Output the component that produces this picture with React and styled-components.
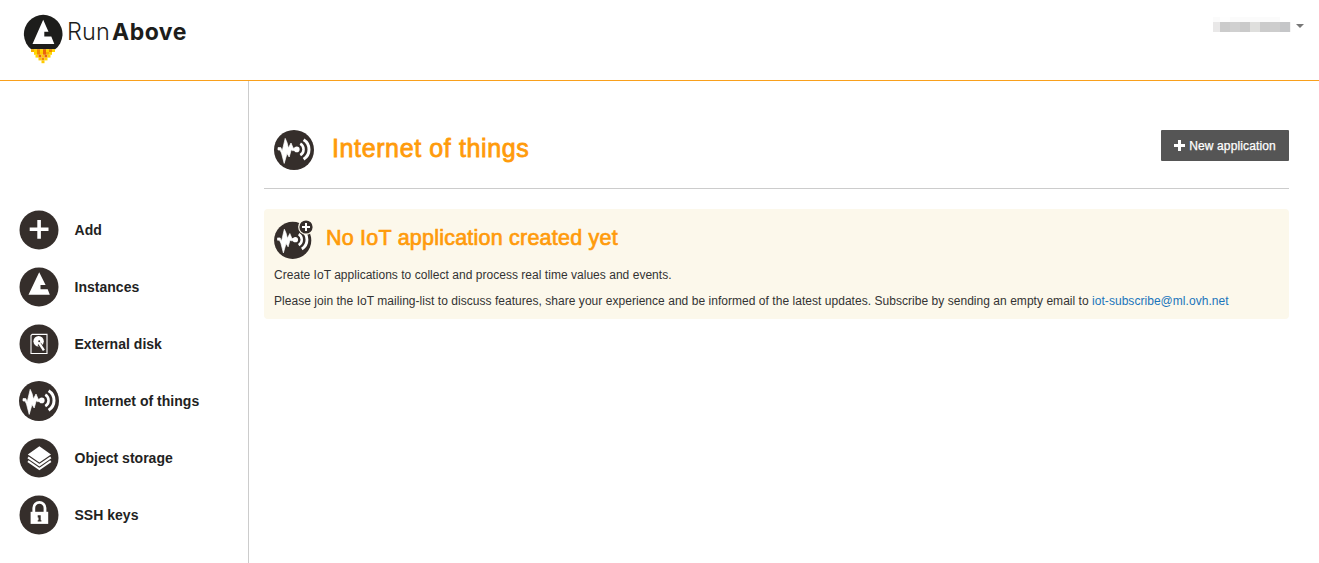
import React from "react";
import styled, { createGlobalStyle } from "styled-components";

const GlobalStyle = createGlobalStyle`
  * { box-sizing: border-box; }
  html, body { margin: 0; padding: 0; background: #fff; }
  body { font-family: "Liberation Sans", Arial, sans-serif; font-size: 12px; color: #333; }
`;

const INK = "#352e2b";
const ORANGE = "#ff9b0b";

const Page = styled.div`
  display: flex;
  flex-direction: column;
  height: 563px;
  overflow: hidden;
`;
const Header = styled.header`
  display: flex;
  justify-content: space-between;
  align-items: flex-start;
  height: 81px;
  padding: 14px 15px 0 23px;
  border-bottom: 1px solid #f9a01c;
`;
const Brand = styled.div`
  display: flex;
  align-items: flex-start;
  color: #1d1d1b;
  font-family: Lato, sans-serif;
`;
const BrandLight = styled.span`
  margin: 4px 0 0 3px;
  width: 45px;
  font-family: Inter, sans-serif;
  font-size: 23.5px;
  font-weight: 300;
  line-height: 28px;
  letter-spacing: 0.1px;
`;
const BrandBold = styled.span`
  margin-top: 4px;
  font-family: Inter, sans-serif;
  font-size: 23px;
  font-weight: 700;
  line-height: 28px;
  letter-spacing: 0.5px;
`;
const User = styled.div`
  display: flex;
  align-items: center;
  gap: 5px;
  margin-top: 3px;
`;
const Redacted = styled.div`
  display: grid;
  grid-template-columns: 7px repeat(7, 10px) 1px;
  grid-template-rows: 5px 10px;
`;
const Tile = styled.span`
  background: ${(p) => p.$tone};
`;
const Caret = styled.span`
  border: 4px solid transparent;
  border-top-color: #777;
  border-bottom: 0;
  margin-top: 2px;
`;
const Body = styled.div`
  display: flex;
  flex: 1;
  min-height: 0;
`;
const Sidebar = styled.nav`
  width: 249px;
  padding: 120px 0 0 19px;
  border-right: 1px solid #ccc;
`;
const NavItem = styled.a`
  display: flex;
  align-items: center;
  gap: ${(p) => (p.$active ? "25.5px" : "15.5px")};
  height: 57px;
  color: #222;
  font-size: 14px;
  font-weight: 700;
  letter-spacing: 0.02px;
`;
const Main = styled.main`
  flex: 1;
  padding: 48px 30px 0 15px;
`;
const TitleRow = styled.div`
  display: flex;
  align-items: flex-start;
  height: 60px;
  padding: 1px 0 0 10px;
  border-bottom: 1px solid #ccc;
`;
const Title = styled.h1`
  flex: 1;
  margin: 3px 0 0 18px;
  color: ${ORANGE};
  font-size: 25px;
  font-weight: 400;
  line-height: 30px;
  letter-spacing: 0.62px;
  -webkit-text-stroke: 0.8px ${ORANGE};
`;
const Button = styled.button`
  display: flex;
  align-items: center;
  justify-content: center;
  gap: 4px;
  width: 128px;
  height: 31px;
  padding: 0;
  border: 0;
  border-radius: 1px;
  background: #555;
  color: #fff;
  font: 12px "Liberation Sans", Arial, sans-serif;
  letter-spacing: 0.12px;
  -webkit-text-stroke: 0.25px #fff;
`;
const Notice = styled.section`
  height: 110px;
  margin-top: 20px;
  padding: 10px;
  border-radius: 4px;
  background: #fcf8eb;
`;
const NoticeHead = styled.div`
  display: flex;
  height: 40px;
`;
const NoticeTitle = styled.h2`
  margin: 6px 0 0 12px;
  color: ${ORANGE};
  font-size: 21.5px;
  font-weight: 400;
  line-height: 26px;
  letter-spacing: 0.22px;
  -webkit-text-stroke: 0.7px ${ORANGE};
`;
const Text = styled.p`
  margin: ${(p) => p.$top} 0 0;
  line-height: 16px;
  white-space: nowrap;
  letter-spacing: ${(p) => p.$track};
`;
const Link = styled.a`
  color: #1a75bb;
`;

function Logo() {
  const rows = [
    ["#f9b000", "#ffd500", "#f18a00", "#ffd500", "#e8650d", "#ffd500", "#f18a00", "#ffd500"],
    ["#ffd500", "#f18a00", "#ffcb00", "#e8650d", "#f9b000", "#ffd500"],
    ["#ffd500", "#e8650d", "#ffcb00", "#e8650d", "#ffd500"],
    ["#ffcb00", "#f18a00", "#ffd500"],
    ["#ffcb00"],
  ];
  return (
    <svg width="41" height="50" viewBox="0 0 41 50">
      <path d="M8.2 35.2A19.3 19.3 0 1 1 32.2 35.2Z" fill="#1d1d1b" />
      <path d="M20.2 5.8 25.5 17.8H21.3V22.5H28.3L31.3 30H9.5Z" fill="#fff" />
      {rows.map((row, y) =>
        row.map((c, x) => (
          <rect key={y + "-" + x} x={20 - row.length * 1.5 + x * 3} y={35.2 + y * 2.8} width="3" height="2.8" fill={c} />
        ))
      )}
    </svg>
  );
}

const Disc = ({ children }) => (
  <svg width="40" height="40" viewBox="0 0 40 40">
    <circle cx="20" cy="20" r="19.5" fill={INK} />
    {children}
  </svg>
);

const AddIcon = () => (
  <Disc><path d="M18.3 10h3.6v7.6h7.6v3.5h-7.6v7.6h-3.6v-7.6H10.7v-3.5h7.6z" fill="#fff" /></Disc>
);
const InstanceIcon = () => (
  <Disc><path d="M20.2 5.3 26.6 18H21.5V22.3H28.7L30.8 27.8H9.5Z" fill="#fff" /></Disc>
);
const DiskIcon = () => (
  <Disc>
    <path d="M13.2 10.4H28V29.5H12V11.6Z" fill="none" stroke="#fff" strokeWidth="1.1" />
    <circle cx="19.6" cy="17.3" r="5.2" fill="#fff" />
    <circle cx="20.2" cy="17.3" r="1" fill={INK} />
    <path d="M20.2 19.8 25 26.4" stroke={INK} strokeWidth="4" />
    <path d="m20.2 19.2 4.7 7.2" stroke="#fff" strokeWidth="2.4" />
  </Disc>
);
const Pulse = () => (
  <g fill="none" stroke="#fff">
    <path d="M4 17.6H6.8L8.2 21 11.2 8.4 13 12.5 14.4 18 17 13 19.2 18.2H22V20.6H18.2L17.2 19.8 15.2 27 13 23.5 10.2 33.4 7.5 23 6 20H4Z" fill="#fff" strokeWidth="0.7" />
    <circle cx="22.8" cy="19.4" r="2.8" fill="#fff" stroke="none" />
    <path d="M26.3 13.6A6.8 6.8 0 0 1 26.3 25.2" strokeWidth="2.6" />
    <path d="M29.6 9.8A11.4 11.4 0 0 1 29.6 29.2" strokeWidth="3" />
  </g>
);
const IotIcon = () => (
  <svg width="40" height="40" viewBox="0 0 40 40">
    <circle cx="20" cy="20" r="20" fill={INK} />
    <Pulse />
  </svg>
);
const StorageIcon = () => (
  <Disc>
    <path d="M20.4 8.2 32 16.4 20.4 24.4 8.8 16.4Z" fill="#fff" />
    <path d="m9 19.4 11.4 7.8L31.8 19.4M9 23.2 20.4 31 31.8 23.2" fill="none" stroke="#fff" strokeWidth="2.1" />
  </Disc>
);
const LockIcon = () => (
  <Disc>
    <path d="M14.8 18V12.9a5.6 5.6 0 0 1 11.2 0V18" fill="none" stroke="#fff" strokeWidth="2.8" />
    <path d="M11.6 16.8H29.2V28.9H11.6Z" fill="#fff" />
    <path d="M18.7 20.2h3v5h.7v1.2h-3.7v-1.2h.8v-2.8h-.8z" fill={INK} />
  </Disc>
);
const IotAddIcon = () => (
  <svg width="40" height="40" viewBox="0 0 40 40">
    <circle cx="18.7" cy="21.4" r="18.6" fill={INK} />
    <g transform="translate(-.3 2.2) scale(.95)"><Pulse /></g>
    <circle cx="32" cy="8" r="7.9" fill="#fcf8eb" />
    <circle cx="32" cy="8" r="6.6" fill={INK} />
    <path d="M32 4v8M28 8h8" stroke="#fff" strokeWidth="2" />
  </svg>
);

const items = [
  { label: "Add", Icon: AddIcon },
  { label: "Instances", Icon: InstanceIcon },
  { label: "External disk", Icon: DiskIcon },
  { label: "Internet of things", Icon: IotIcon, active: true },
  { label: "Object storage", Icon: StorageIcon },
  { label: "SSH keys", Icon: LockIcon },
];
const upper = ["#fbfbfb", "#fefefe", "#fbfbfb", "#fbfbfb", "#fbfbfb", "#fbfbfb", "#fbfbfb", "#fff", "#fff"];
const lower = ["#e9e8e8", "#cbcbcb", "#d0d0d0", "#cacaca", "#dfdfdd", "#cbcbcb", "#cdcdcd", "#c5c6c8", "#f4f4f4"];

export default function App() {
  return (
    <Page>
      <GlobalStyle />
      <Header>
        <Brand>
          <Logo />
          <BrandLight>Run</BrandLight>
          <BrandBold>Above</BrandBold>
        </Brand>
        <User>
          <Redacted>
            {[...upper, ...lower].map((tone, i) => <Tile key={i} $tone={tone} />)}
          </Redacted>
          <Caret />
        </User>
      </Header>
      <Body>
        <Sidebar>
          {items.map(({ label, Icon, active }) => (
            <NavItem key={label} $active={active}>
              <Icon />
              {label}
            </NavItem>
          ))}
        </Sidebar>
        <Main>
          <TitleRow>
            <IotIcon />
            <Title>Internet of things</Title>
            <Button>
              <svg width="11" height="11" viewBox="0 0 11 11">
                <path d="M5.5 0v11M0 5.5h11" stroke="#fff" strokeWidth="3" />
              </svg>
              New application
            </Button>
          </TitleRow>
          <Notice>
            <NoticeHead>
              <IotAddIcon />
              <NoticeTitle>No IoT application created yet</NoticeTitle>
            </NoticeHead>
            <Text $top="8px" $track="0.03px">Create IoT applications to collect and process real time values and events.</Text>
            <Text $top="10px" $track="0.038px">
              Please join the IoT mailing-list to discuss features, share your experience and be informed of the latest
              updates. Subscribe by sending an empty email to <Link>iot-subscribe@ml.ovh.net</Link>
            </Text>
          </Notice>
        </Main>
      </Body>
    </Page>
  );
}
